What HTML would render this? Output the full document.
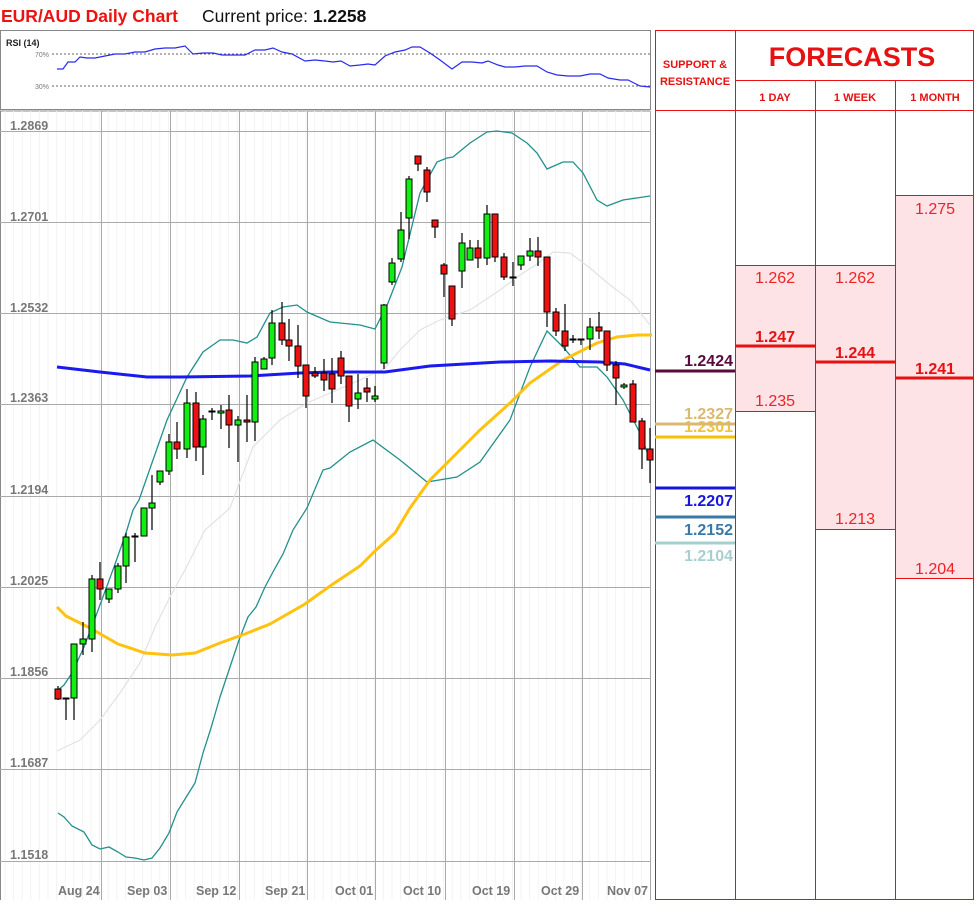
<!DOCTYPE html>
<html><head><meta charset="utf-8"><style>
body{margin:0;background:#fff;width:975px;height:900px;overflow:hidden;font-family:"Liberation Sans",sans-serif}
</style></head><body>
<svg id="s" width="975" height="900" xmlns="http://www.w3.org/2000/svg" font-family="Liberation Sans, sans-serif">
<text x="1" y="22" font-size="17.5" font-weight="bold" fill="#ee1111">EUR/AUD Daily Chart</text>
<text x="202" y="22" font-size="17.5" fill="#111">Current price: <tspan font-weight="bold">1.2258</tspan></text>
<!-- RSI box -->
<rect x="0.5" y="30.5" width="650" height="79" fill="#fff" stroke="#888"/>
<text x="6" y="46" font-size="9" font-weight="bold" fill="#222">RSI (14)</text>
<line x1="52" y1="54" x2="650" y2="54" stroke="#666" stroke-dasharray="2,2"/>
<line x1="52" y1="86" x2="650" y2="86" stroke="#666" stroke-dasharray="2,2"/>
<text x="35" y="57" font-size="7" fill="#777">70%</text>
<text x="35" y="89" font-size="7" fill="#777">30%</text>
<polyline fill="none" stroke="#2a2aee" stroke-width="1.2" points="57,69 63,69 68,62 75,62 80,57 87,58 95,58 105,56 115,54 125,54 135,52 145,52 155,49 165,48 175,48 185,46 193,54 203,53 213,53 222,55 232,55 245,55 255,50 265,50 273,48 282,52 292,54 305,61 315,60 325,61 333,62 341,61 350,66 360,65 368,64 375,65 385,56 395,52 405,50 412,47 420,47 430,53 440,60 452,69 462,62 472,62 482,63 488,61 498,65 505,67 515,67 525,66 537,66 547,72 557,75 568,76 580,76 590,74 600,74 608,78 620,80 628,80 640,86 650,87"/>
<!-- main chart frame -->
<line x1="0" y1="111" x2="650" y2="111" stroke="#888"/>
<line x1="0.5" y1="111" x2="0.5" y2="900" stroke="#888"/>
<line x1="650.5" y1="111" x2="650.5" y2="900" stroke="#aaa"/>
<g id="grid"></g>
<g font-size="12.5" font-weight="bold" fill="#777">
<text x="10" y="130">1.2869</text><text x="10" y="221">1.2701</text><text x="10" y="312">1.2532</text><text x="10" y="402">1.2363</text><text x="10" y="494">1.2194</text><text x="10" y="585">1.2025</text><text x="10" y="676">1.1856</text><text x="10" y="767">1.1687</text><text x="10" y="859">1.1518</text>
<text x="58" y="895">Aug 24</text><text x="127" y="895">Sep 03</text><text x="196" y="895">Sep 12</text><text x="265" y="895">Sep 21</text><text x="335" y="895">Oct 01</text><text x="403" y="895">Oct 10</text><text x="472" y="895">Oct 19</text><text x="541" y="895">Oct 29</text><text x="607" y="895">Nov 07</text>
</g>
<polyline fill="none" stroke="#e2e2e2" stroke-width="1.2" points="57,751 80,740 100,720 120,693 140,663 155,627 170,597 185,570 205,530 230,508 253,447 280,420 307,403 330,393 360,380 385,368 400,350 420,330 440,320 470,310 500,290 520,275 540,262 553,252 570,253 590,268 610,285 630,300 650,325"/>
<polyline fill="none" stroke="#23908c" stroke-width="1.3" points="58,690 64,685 72,673 84,647 97,613 114,567 126,533 133,510 139,500 167,420 187,377 203,352 220,340 233,340 247,343 257,337 270,313 283,307 297,305 307,312 330,322 360,325 375,329 388,303 402,267 420,193 437,162 447,158 453,157 470,143 487,132 497,131 512,133 527,143 537,153 547,169 563,162 573,162 583,173 597,200 607,206 623,200 650,196"/>
<polyline fill="none" stroke="#23908c" stroke-width="1.3" points="58,813 64,817 72,826 84,832 92,845 100,849 109,847 118,852 126,857 135,858 144,860 152,858 160,848 169,833 177,812 185,799 195,783 203,753 211,728 220,697 230,667 239,640 248,617 256,607 265,587 274,570 283,554 293,530 307,508 323,470 330,468 350,452 373,440 400,460 427,482 457,477 480,462 510,420 530,367 547,331 563,347 580,367 597,367 607,377 623,400 640,433 650,460"/>
<polyline fill="none" stroke="#ffc20e" stroke-width="3" points="57,607 66,616 90,628 118,644 145,653 172,655 195,653 220,643 245,634 270,624 305,604 330,586 360,566 375,551 395,533 410,508 430,480 457,453 480,430 510,403 530,383 563,360 597,343 617,337 637,335 652,335"/>
<polyline fill="none" stroke="#1a1af0" stroke-width="3" points="57,367 100,372 147,377 180,377 250,376 300,373 330,372 385,372 430,366 500,362 550,361 600,362 625,364 650,370"/>
<g id="candles"></g>
<!-- table -->
<rect x="735" y="265" width="80" height="146" fill="#fde3e5"/>
<rect x="815" y="265" width="80" height="264" fill="#fde3e5"/>
<rect x="895" y="195" width="79" height="383" fill="#fde3e5"/>
<g stroke="#e81010" stroke-width="1" fill="none">
<rect x="655.5" y="30.5" width="318" height="869"/>
<line x1="735.5" y1="30" x2="735.5" y2="900"/>
<line x1="815.5" y1="80" x2="815.5" y2="900"/>
<line x1="895.5" y1="80" x2="895.5" y2="900"/>
<line x1="735" y1="80.5" x2="974" y2="80.5"/>
<line x1="655" y1="110.5" x2="974" y2="110.5"/>
<line x1="735" y1="265.5" x2="895" y2="265.5"/>
<line x1="735" y1="411.5" x2="815" y2="411.5"/>
<line x1="815" y1="529.5" x2="895" y2="529.5"/>
<line x1="895" y1="195.5" x2="974" y2="195.5"/>
<line x1="895" y1="578.5" x2="974" y2="578.5"/>
</g>
<g stroke="#e81010" stroke-width="3">
<line x1="735" y1="346" x2="815" y2="346"/><line x1="815" y1="362" x2="895" y2="362"/><line x1="895" y1="378" x2="974" y2="378"/>
</g>
<g fill="#e81010" font-weight="bold" text-anchor="middle">
<text x="695" y="68" font-size="11">SUPPORT &amp;</text>
<text x="695" y="85" font-size="11">RESISTANCE</text>
<text x="852" y="66" font-size="27">FORECASTS</text>
<text x="775" y="101" font-size="11">1 DAY</text>
<text x="855" y="101" font-size="11">1 WEEK</text>
<text x="935" y="101" font-size="11">1 MONTH</text>
<text x="775" y="342" font-size="16">1.247</text>
<text x="855" y="358" font-size="16">1.244</text>
<text x="935" y="374" font-size="16">1.241</text>
</g>
<g fill="#ee2222" font-size="16" text-anchor="middle">
<text x="775" y="283">1.262</text><text x="855" y="283">1.262</text><text x="935" y="214">1.275</text>
<text x="775" y="406">1.235</text><text x="855" y="524">1.213</text><text x="935" y="574">1.204</text>
</g>
<g font-weight="bold" font-size="16" text-anchor="end">
<text x="733" y="366" fill="#5a0a3c">1.2424</text>
<text x="733" y="419" fill="#d9b873">1.2327</text>
<text x="733" y="432" fill="#f2c23a">1.2301</text>
<text x="733" y="506" fill="#1616dd">1.2207</text>
<text x="733" y="535" fill="#3a78a8">1.2152</text>
<text x="733" y="561" fill="#a8cfd0">1.2104</text>
</g>
<line x1="655" y1="371" x2="735" y2="371" stroke="#5a0a3c" stroke-width="3"/>
<line x1="655" y1="424" x2="735" y2="424" stroke="#d9b873" stroke-width="3"/>
<line x1="655" y1="437" x2="735" y2="437" stroke="#f5c000" stroke-width="3"/>
<line x1="655" y1="488" x2="735" y2="488" stroke="#1616dd" stroke-width="3"/>
<line x1="655" y1="517" x2="735" y2="517" stroke="#3a78a8" stroke-width="3"/>
<line x1="655" y1="543" x2="735" y2="543" stroke="#a8cfd0" stroke-width="3"/>
</svg>
<script>
var NS="http://www.w3.org/2000/svg";
function el(p,t,a){var e=document.createElementNS(NS,t);for(var k in a)e.setAttribute(k,a[k]);p.appendChild(e);return e;}
var g=document.getElementById("grid");
for(var x=5;x<650;x+=8.6)el(g,"line",{x1:x,y1:111,x2:x,y2:900,stroke:"#f3f3f3"});
[101,170,239,307,375,445,514,582].forEach(function(x){el(g,"line",{x1:x+.5,y1:111,x2:x+.5,y2:900,stroke:"#aaa"});});
[131,222,313,404,496,587,678,769,861].forEach(function(y){el(g,"line",{x1:0,y1:y+.5,x2:650,y2:y+.5,stroke:"#aaa"});});
var C=[[58,689,699,686,700,'r'],[66,698,699,698,720,'g'],[74,644,698,644,720,'g'],[83,639,644,622,655,'g'],[92,579,639,575,652,'g'],[100,579,589,562,600,'r'],[109,589,599,589,603,'g'],[118,566,589,563,593,'g'],[126,537,566,533,583,'g'],[135,536,537,533,562,'g'],[144,508,536,508,536,'g'],[152,503,508,475,530,'g'],[160,471,482,471,485,'g'],[169,442,471,434,475,'g'],[177,442,449,422,459,'r'],[187,403,449,389,458,'g'],[196,403,447,392,461,'r'],[203,419,447,415,475,'g'],[212,411,412,408,420,'k'],[221,411,413,405,429,'g'],[229,410,425,395,448,'r'],[238,420,425,416,462,'g'],[247,420,422,395,442,'r'],[255,362,422,357,441,'g'],[264,359,369,357,369,'g'],[272,323,358,310,365,'g'],[282,323,340,302,345,'r'],[289,340,346,319,361,'r'],[298,346,366,325,378,'r'],[306,365,396,365,408,'r'],[315,373,376,367,378,'r'],[324,373,380,359,391,'r'],[332,374,389,358,403,'r'],[341,358,376,351,384,'r'],[349,376,406,376,422,'r'],[358,393,399,374,409,'g'],[367,388,392,378,402,'r'],[375,396,399,386,402,'g'],[384,305,363,304,369,'g'],[392,263,282,258,285,'g'],[401,230,259,212,262,'g'],[409,179,218,176,239,'g'],[418,156,164,156,171,'r'],[427,170,192,167,202,'r'],[435,220,227,220,238,'r'],[444,265,274,263,297,'r'],[452,286,319,286,326,'r'],[462,243,271,233,288,'g'],[470,248,260,240,260,'g'],[478,248,258,240,268,'r'],[487,214,258,205,265,'g'],[495,214,257,214,262,'r'],[504,257,277,253,280,'r'],[513,277,278,262,286,'k'],[521,256,265,256,270,'g'],[530,251,256,238,261,'g'],[538,251,257,237,266,'r'],[547,257,312,257,327,'r'],[556,312,331,308,336,'r'],[565,331,346,304,351,'r'],[573,339,340,335,343,'k'],[581,339,340,339,345,'k'],[590,327,339,318,350,'g'],[599,327,331,312,339,'r'],[607,331,365,331,371,'r'],[616,365,378,361,405,'r'],[624,385,387,383,389,'g'],[633,384,422,380,422,'r'],[642,421,449,418,469,'r'],[650,449,460,428,483,'r']];
var cg=document.getElementById("candles");
C.forEach(function(c){
 el(cg,"line",{x1:c[0],y1:c[3],x2:c[0],y2:c[4],stroke:"#000","stroke-width":1.2});
 var h=Math.max(c[2]-c[1],1);
 el(cg,"rect",{x:c[0]-3,y:c[1],width:6,height:h,fill:c[5]=='g'?'#11ee11':(c[5]=='r'?'#ee1111':'#000'),stroke:"#000","stroke-width":1});
});
</script>
</body></html>
